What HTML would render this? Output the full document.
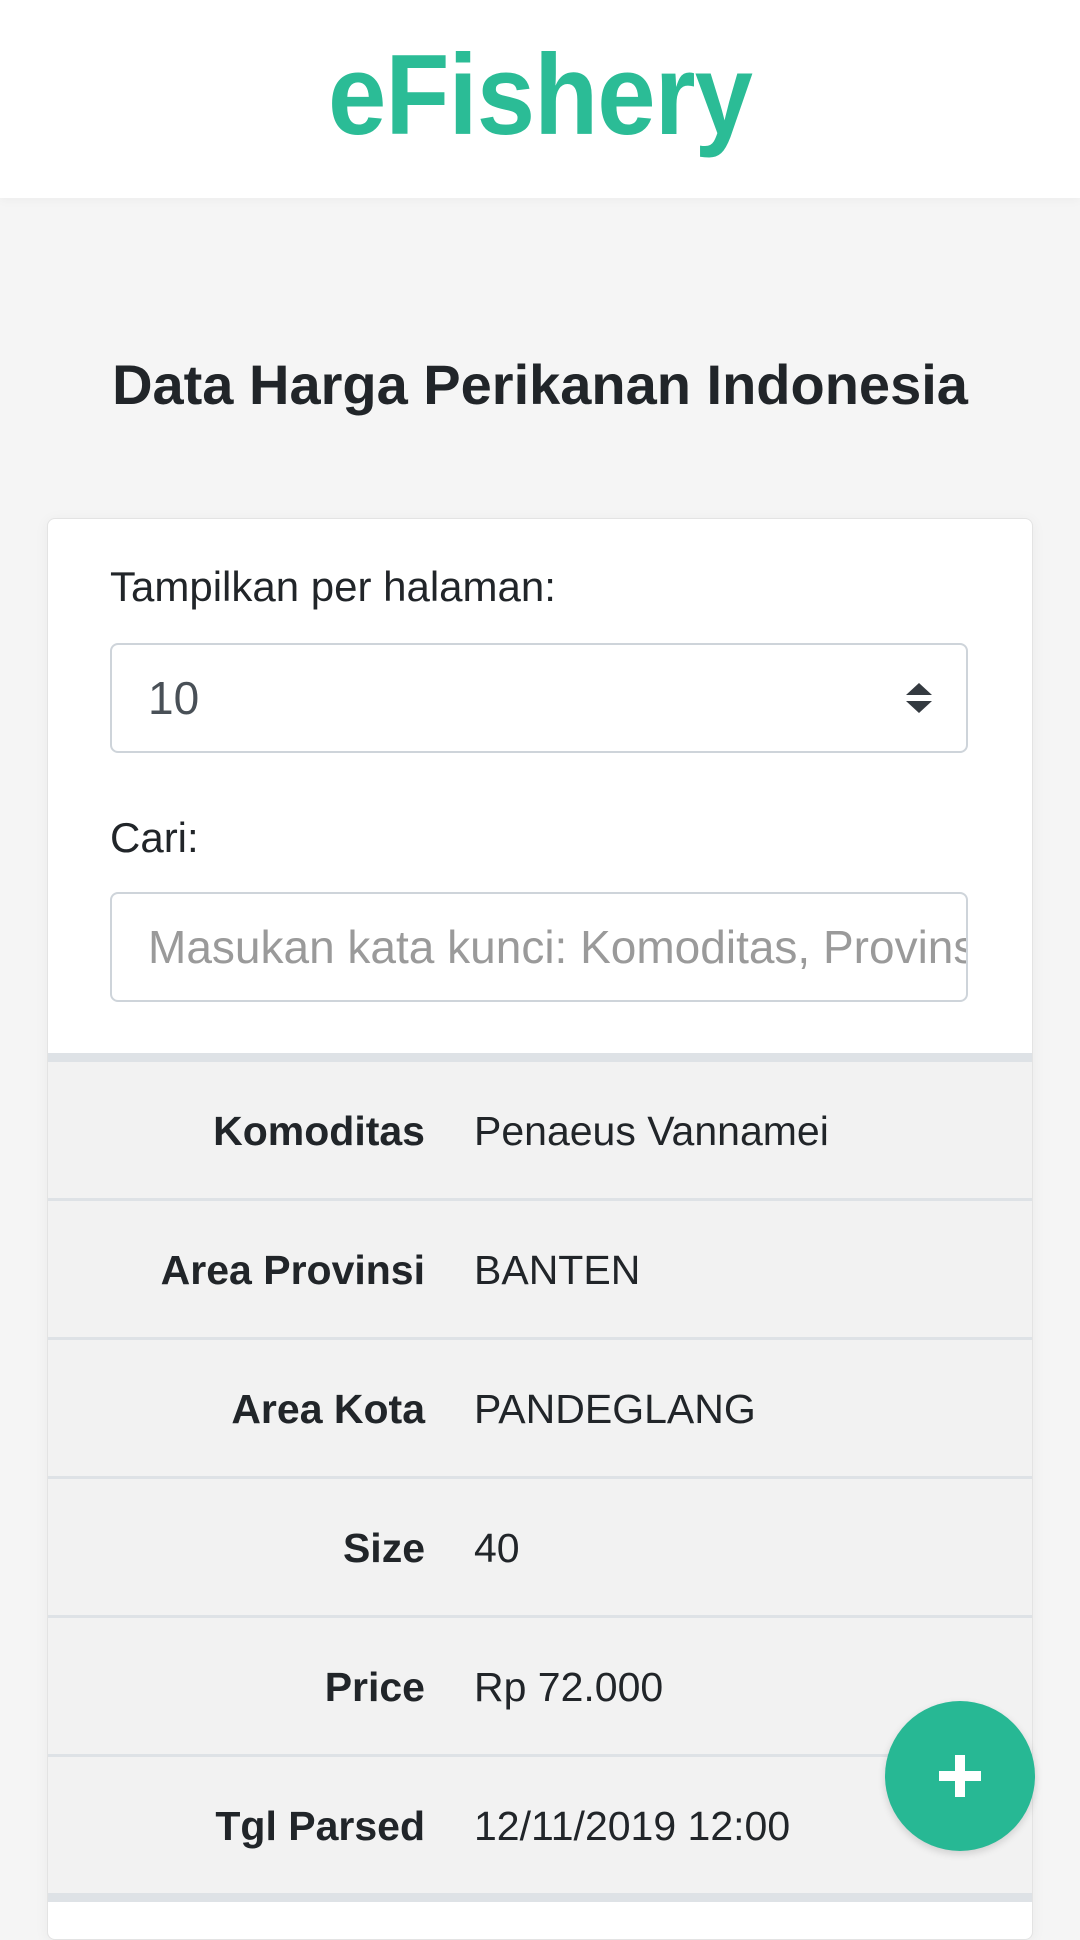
<!DOCTYPE html>
<html><head><meta charset="utf-8"><style>
html,body{margin:0;padding:0;width:1080px;height:1920px;overflow:hidden;background:#f5f5f5;font-family:"Liberation Sans",Arial,sans-serif;color:#212529}
.hdr{position:absolute;left:0;top:0;width:1080px;height:198px;background:#fff;box-shadow:0 2px 10px rgba(0,0,0,.04)}
.logo{position:absolute;left:540px;top:30px;transform:translateX(-50%) scaleX(0.92);font-weight:bold;font-size:114px;color:#2bbc96;letter-spacing:-1px;white-space:nowrap}
h1{position:absolute;left:0;width:1080px;top:352px;margin:0;text-align:center;font-size:56px;font-weight:bold;color:#212529}
.card{position:absolute;left:47px;top:518px;width:984px;height:1420px;background:#fff;border:1px solid #e3e3e3;border-radius:8px;box-shadow:0 2px 14px rgba(0,0,0,.05);overflow:hidden}
.lbl{position:absolute;left:62px;font-size:42px}
.box{position:absolute;left:62px;width:858px;height:110px;border:2px solid #ced4da;border-radius:8px;box-sizing:border-box;font-size:46px;line-height:106px;padding-left:36px;white-space:nowrap;overflow:hidden}
.tbl{position:absolute;left:0;top:534px;width:984px;border-top:9px solid #dee2e6}
.row{height:136px;border-bottom:3px solid #dee2e6;background:#f2f2f2;position:relative;font-size:41px}
.row .k{position:absolute;right:607px;top:46px;font-weight:bold;font-size:41px}
.row .v{position:absolute;left:426px;top:46px}
.tbl .last{border-bottom:9px solid #dee2e6}
.fab{position:absolute;left:885px;top:1701px;width:150px;height:150px;border-radius:50%;background:#27b894;box-shadow:0 3px 8px rgba(0,0,0,.15)}
.fab:before{content:"";position:absolute;left:54px;top:70px;width:42px;height:10px;background:#fff}
.fab:after{content:"";position:absolute;left:70px;top:54px;width:10px;height:42px;background:#fff}
</style></head><body>
<div class="hdr"><div class="logo">eFishery</div></div>
<h1>Data Harga Perikanan Indonesia</h1>
<div class="card">
<div class="lbl" style="top:44px">Tampilkan per halaman:</div>
<div class="box" style="top:124px;color:#495057">10
<svg style="position:absolute;right:34px;top:38px" width="26" height="30" viewBox="0 0 26 30"><path d="M13 0L26 12H0Z M13 30L26 18H0Z" fill="#343a40"/></svg></div>
<div class="lbl" style="top:295px">Cari:</div>
<div class="box" style="top:373px;color:#9a9a9a">Masukan kata kunci: Komoditas, Provinsi</div>
<div class="tbl">
<div class="row"><span class="k">Komoditas</span><span class="v">Penaeus Vannamei</span></div>
<div class="row"><span class="k">Area Provinsi</span><span class="v">BANTEN</span></div>
<div class="row"><span class="k">Area Kota</span><span class="v">PANDEGLANG</span></div>
<div class="row"><span class="k">Size</span><span class="v">40</span></div>
<div class="row"><span class="k">Price</span><span class="v">Rp 72.000</span></div>
<div class="row last"><span class="k">Tgl Parsed</span><span class="v">12/11/2019 12:00</span></div>
</div>
</div>
<div class="fab"></div>
</body></html>
